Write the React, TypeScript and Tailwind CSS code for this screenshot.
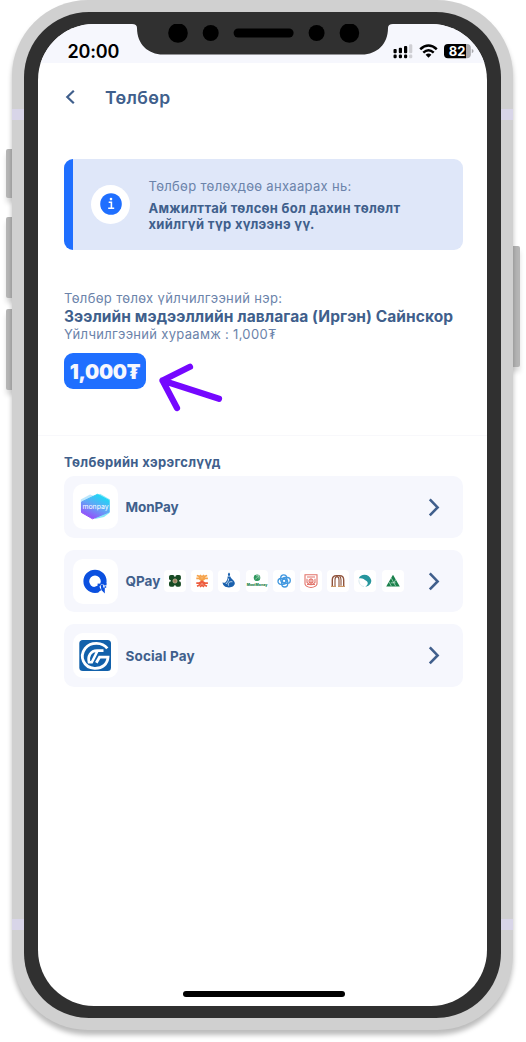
import React from "react";

function StatusIcons() {
  return (
    <svg className="absolute left-[354px] top-[18px]" width="82" height="20" viewBox="392 42 82 20">
      <g fill="#000">
        <rect x="393.5" y="49" width="3.2" height="4.2" rx="1" />
        <rect x="398.8" y="47.8" width="3.2" height="5.4" rx="1" />
        <rect x="404" y="46" width="3.2" height="7.2" rx="1" />
        <rect x="393.5" y="54.6" width="3.2" height="3.6" rx="1.2" />
        <rect x="398.8" y="54.6" width="3.2" height="3.6" rx="1.2" />
        <rect x="404" y="54.6" width="3.2" height="3.6" rx="1.2" />
      </g>
      <g fill="#cfcfd4">
        <rect x="409.1" y="44.2" width="3.2" height="9" rx="1.2" />
        <rect x="409.1" y="54.6" width="3.2" height="3.6" rx="1.2" />
      </g>
      <g fill="none" stroke="#000" strokeWidth="2.5">
        <path d="M420.2 49.3 Q428.5 41.8 436.8 49.3" />
        <path d="M423.3 52.6 Q428.5 48 433.7 52.6" />
      </g>
      <path d="M425.6 54.7 Q428.5 52.4 431.4 54.7 L428.5 57.7Z" />
      <path d="M448 44h18v14.2h-18a4 4 0 0 1-4-4V48a4 4 0 0 1 4-4z" />
      <path d="M466 44h.8a4 4 0 0 1 4 4v6.2a4 4 0 0 1-4 4h-.8z" fill="#a9a9ad" />
      <path d="M471.8 49v4.2q1.8-.6 1.8-2.1t-1.8-2.1z" fill="#a9a9ad" />
      <text x="457" y="55.9" fontFamily="Inter, sans-serif" fontSize="13" fontWeight="700" fill="#fff" textAnchor="middle">82</text>
    </svg>
  );
}

function Notch() {
  return (
    <svg className="absolute left-[94px] top-0" width="262" height="31" viewBox="132 24 262 31">
      <path d="M132 24H393Q388 24 388 28C388 44 377 54.5 362 54.5H163C148 54.5 137 44 137 28Q137 24 132 24Z" fill="#303030" />
      <circle cx="178" cy="33" r="9.8" />
      <circle cx="210.7" cy="33" r="8" />
      <rect x="233.6" y="28.5" width="60" height="9" rx="4.5" />
      <circle cx="316.6" cy="33" r="8" />
      <circle cx="349.4" cy="33" r="9.8" />
    </svg>
  );
}

function MonPayLogo() {
  return (
    <svg width="45" height="45" viewBox="0 0 45 45">
      <defs>
        <linearGradient id="mon" x1=".8" y1="0" x2=".25" y2="1">
          <stop offset="0" stopColor="#12e0f5" />
          <stop offset=".5" stopColor="#62a5f6" />
          <stop offset="1" stopColor="#9a45fb" />
        </linearGradient>
      </defs>
      <path d="M17 10.5 7.8 15.5V27L22 34l14-5V17z" fill="#8fd7fa" opacity=".6" />
      <path d="M27 9.8 37 15.5V28.5L31 33 22 35 13 20z" fill="#55dbf5" opacity=".7" />
      <path d="M24.5 10.3 36 16.4V28L19.5 34.8 8.5 28.5V18z" fill="url(#mon)" stroke="url(#mon)" strokeWidth="1" strokeLinejoin="round" />
      <text x="22.5" y="24.8" textAnchor="middle" fill="#fff" fontFamily="Inter, sans-serif" fontSize="6.5" textLength="26" lengthAdjust="spacingAndGlyphs">monpay</text>
    </svg>
  );
}

function QPayLogo() {
  return (
    <svg width="45" height="45" viewBox="0 0 45 45">
      <circle cx="22" cy="22.3" r="8.7" fill="none" stroke="#0b50df" strokeWidth="5.8" />
      <path d="M25 29.5 28 25.5 36 26V37H28z" fill="#fff" />
      <g fill="#0b50df">
        <path d="M20 28.5 25.6 26.3 28.3 31.2 24 33.6z" />
        <rect x="24.6" y="24.6" width="2.4" height="2.4" />
        <path d="M27.6 26h2.6v2.6h1.6v5.8l-3.4-3.4z" />
        <rect x="31" y="24.2" width="2.5" height="2.2" />
        <rect x="31.6" y="27.2" width="1.6" height="1.6" />
      </g>
    </svg>
  );
}

function SocialPayLogo() {
  return (
    <svg width="45" height="45" viewBox="0 0 45 45">
      <rect x="6.3" y="7" width="31.7" height="31" rx="3.5" fill="#1261ab" />
      <g fill="none" stroke="#fff">
        <path d="M34.3 15.3C29.5 9 18 8.4 12.2 15.3C6 23.5 10.5 34.8 21.5 35.3C29.5 35.6 34.6 31 35 24.2H26.5L23.3 29.8" strokeWidth="2.8" />
        <path d="M30.5 17.6H24C17.5 17.6 14.5 23.5 16 29.3L18.8 29.3L24.2 18.5" strokeWidth="2.6" />
      </g>
    </svg>
  );
}

const bankLogos: React.ReactNode[] = [
  <g key="khan">
    <g fill="#174a23">
      <rect x="5" y="5" width="5.6" height="5.4" rx="1.8" />
      <rect x="11.3" y="5" width="5.6" height="5.4" rx="1.8" />
      <rect x="5" y="11.2" width="5.6" height="5.6" rx="1.8" />
      <rect x="11.3" y="11.2" width="5.6" height="5.6" rx="1.8" />
      <rect x="7" y="7" width="8" height="8" />
    </g>
    <circle cx="11" cy="11" r="2.1" fill="#a08160" stroke="#d4c1a5" strokeWidth=".7" />
  </g>,
  <g key="tdb" fill="none" strokeWidth="1.7">
    <path d="M5.3 8.3H8L11 10.8 14 8.3H16.9M5.8 5.5 8 6.3 11 10 14 6.3 16.2 5.5M9 5 11 7 13 5" stroke="#f6a34a" />
    <path d="M5.3 13.2H8L11 11.2 14 13.2H16.9M6 16.2 8 15.4 11 12 14 15.4 16 16.2M9 16.8 11 15 13 16.8" stroke="#ed5c3e" />
  </g>,
  <g key="golomt">
    <path d="M11 2.6q2.2 2.2 0 3.9q-2.2-1.7 0-3.9z" fill="#1c62ae" />
    <path d="M9.6 6.5h2.8c.2 2.4 4 3.4 4.4 6.5.1 2.8-2.5 4.4-5.8 4.4-3.7 0-6.4-2-6.4-5.2q1.5 1 2.6.2C9 10.8 9.8 9 9.6 6.5z" fill="#1b61ad" />
    <path d="M14.4 11.8c-3.2-.6-4.9 1.5-3.8 3.8M10.6 8.5c.2 2.5-1.6 4-2.7 5.5" fill="none" stroke="#cce2f4" strokeWidth="1" />
  </g>,
  <g key="most">
    <circle cx="11" cy="7.7" r="3.3" fill="#2f985d" />
    <path d="m9.3 9.4 3.7-3.7m-3 0h3v3" stroke="#d4eedf" strokeWidth=".6" fill="none" />
    <text x="11" y="15.6" textAnchor="middle" fontFamily="Inter, sans-serif" fontSize="3.5" fontWeight="800" fill="#24854c">MostMoney</text>
  </g>,
  <g key="khas" fill="none" stroke="#4399e0" strokeWidth="1.3">
    <rect x="7.7" y="4.8" width="6" height="8" rx="3" />
    <rect x="8.7" y="9" width="6" height="8" rx="3" />
    <rect x="5" y="8.5" width="8" height="5.8" rx="2.9" />
    <rect x="9.3" y="7.5" width="8" height="5.8" rx="2.9" />
  </g>,
  <g key="state" fill="none" stroke="#e27369" strokeWidth="1.1">
    <path d="M5 4.7h12v9.5q-1 3-6 3.3-5-.3-6-3.3z" />
    <path d="M7 7h8M7 8.8v3.5q4 5 8 0V8.8" />
    <circle cx="11" cy="11" r="2" />
    <path d="M11 8.5v6M7 14.5h8" />
  </g>,
  <g key="arch" fill="none">
    <path d="M5.3 16V10q0-4.4 4.2-4.4h3.2q4 0 4 4.4v6" stroke="#90533c" strokeWidth="1.4" />
    <path d="M8 16V10q0-3.4 2-3.4t2 3.4v6m2-.2V10q0-2.5-1.4-4" stroke="#8c5139" strokeWidth="1.1" />
    <path d="M4 16.4h5M11 16.4h7" stroke="#c88d55" />
  </g>,
  <g key="capitron">
    <path d="M4.8 8.5C6.5 3.2 15.5 3.4 17.2 10c.7 3.8-3 6.8-6 6.5 3-1.4 3.2-4.5 1.3-5.6C9.8 9.5 8.7 7.8 4.8 8.5z" fill="#27969d" />
    <path d="M5 9.5C4.5 13 6.5 16.2 10 16.5" fill="none" stroke="#d8e9ee" />
  </g>,
  <g key="trans">
    <path d="M11 4.8 17.8 16.5H4.2z" fill="#19804a" />
    <path d="m9.3 8.2 4.4 8M7 12l2.4 4.2M8.8 12.8h4.8M11.8 12.8 14 9.4" stroke="#dff2e8" strokeWidth=".6" fill="none" />
  </g>,
];

function Method({ name, className, logo, banks }: { name: string; className: string; logo: React.ReactNode; banks?: boolean }) {
  return (
    <div className="flex h-[62.5px] items-center rounded-[10px] bg-[#f6f7fd] pl-[8.5px] pr-[22.5px]">
      <div className="size-[45px] shrink-0 overflow-hidden rounded-[10px] bg-white">{logo}</div>
      <span className={`ml-[8px] whitespace-nowrap pt-[1px] text-[13.5px] font-bold text-[#405f8c] ${className}`}>{name}</span>
      {banks && (
        <div className="ml-[3px] flex gap-[5.2px]">
          {bankLogos.map((logoShape, i) => (
            <svg key={i} className="size-[22px] shrink-0 rounded-[4px] bg-white" viewBox="0 0 22 22">{logoShape}</svg>
          ))}
        </div>
      )}
      <svg className="ml-auto shrink-0" width="14" height="20" viewBox="0 0 14 20">
        <path d="m2.8 2.4 7.8 8-7.8 8" fill="none" stroke="#405f8c" strokeWidth="2.6" />
      </svg>
    </div>
  );
}

export default function App() {
  return (
    <div className="relative h-[1042px] w-[526px] overflow-hidden bg-white px-[12px] font-['Inter','Noto_Sans',sans-serif]">
      <i className="absolute left-[6px] top-[149px] h-[49px] w-[8px] rounded-l-[2px] bg-[#b5b5b5] shadow-[0_5px_5px_#0002]" />
      <i className="absolute left-[6px] top-[217px] h-[81px] w-[8px] rounded-l-[2px] bg-[#b5b5b5] shadow-[0_5px_5px_#0002]" />
      <i className="absolute left-[6px] top-[309px] h-[81px] w-[8px] rounded-l-[2px] bg-[#b5b5b5] shadow-[0_5px_5px_#0002]" />
      <i className="absolute left-[510px] top-[246px] h-[121px] w-[10px] rounded-r-[2px] bg-[#b5b5b5] shadow-[0_5px_5px_#0002]" />

      <div className="relative h-[1030px] w-[500.5px] rounded-[76px] bg-[#d0d0d0] p-[12px] shadow-[0_5px_5px_#0004]">
        <i className="absolute left-0 top-[109px] h-[11px] w-full bg-[#d8d5e8]" />
        <i className="absolute left-0 top-[919px] h-[11px] w-full bg-[#d8d5e8]" />
        <div className="relative h-[1006px] w-[476.5px] rounded-[65px] bg-[#303030] px-[14px] py-[12px]">
          <main className="relative h-[982px] w-[448.5px] overflow-hidden rounded-[56px] bg-white text-[#405f8c]">
            <header className="h-[39px] bg-[#f6f7fd] pl-[29.5px] pt-[16px]">
              <span className="block text-[18px] font-semibold leading-[24px] tracking-[-0.2px] text-black">20:00</span>
            </header>
            <Notch />
            <StatusIcons />

            <div className="flex h-[95.5px] items-start pl-[26.5px] pt-[23px]">
              <svg className="mt-[2px]" width="13" height="18" viewBox="0 0 13 18">
                <path d="M8.8 2.8 2.3 9l6.5 6.2" fill="none" stroke="#405f8c" strokeWidth="2.2" />
              </svg>
              <h1 className="ml-[27.5px] whitespace-nowrap text-[17.5px] font-semibold leading-[24px] tracking-[0.35px]">Төлбөр</h1>
            </div>

            <div className="pl-[26px] pr-[23.5px]">
              <section className="flex h-[91px] items-center overflow-hidden rounded-[9px] border-l-[9.5px] border-[#1f6fff] bg-[#dfe7f9]">
                <div className="ml-[18px] grid size-[39px] shrink-0 place-items-center rounded-full bg-white">
                  <svg width="22" height="22" viewBox="0 0 22 22">
                    <circle cx="11" cy="11" r="10.8" fill="#1f6fff" />
                    <path d="M8.7 9.2H11.4V15M8.2 15.3h6" fill="none" stroke="#fff" strokeWidth="1.6" />
                    <circle cx="11" cy="6.1" r="1.3" fill="#fff" />
                  </svg>
                </div>
                <div className="ml-[18.5px] whitespace-nowrap">
                  <p className="text-[13px] leading-[18px] tracking-[0.31px] text-[#6b83aa]">Төлбөр төлөхдөө анхаарах нь:</p>
                  <p className="mt-[5px] text-[13px] font-bold leading-[16px] tracking-[0.27px]">Амжилттай төлсөн бол дахин төлөлт</p>
                  <p className="text-[13px] font-bold leading-[16px] tracking-[0.33px]">хийлгүй түр хүлээнэ үү.</p>
                </div>
              </section>

              <section className="mt-[39.5px] whitespace-nowrap">
                <p className="text-[13px] leading-[18px] tracking-[0.34px] text-[#6b83aa]">Төлбөр төлөх үйлчилгээний нэр:</p>
                <h2 className="pt-[1px] text-[15.5px] font-bold leading-[18px] tracking-[0.08px]">Зээлийн мэдээллийн лавлагаа (Иргэн) Сайнскор</h2>
                <p className="text-[13px] leading-[17px] tracking-[0.31px] text-[#6b83aa]">Үйлчилгээний хураамж : 1,000₮</p>
                <div className="mt-[9.5px] flex h-[36.5px] w-[82px] items-center justify-center rounded-[9px] bg-[#1f6fff] pt-[2px] text-[20px] font-black tracking-[-0.3px] text-[#f6f7fd]">1,000₮</div>
              </section>
            </div>

            <hr className="mt-[45.5px] border-[#f8f8fb]" />

            <section className="pl-[26px] pr-[23.5px] pt-[17.5px]">
              <h3 className="whitespace-nowrap text-[13px] font-bold leading-[18px] tracking-[0.32px]">Төлбөрийн хэрэгслүүд</h3>
              <div className="mt-[4.5px] flex flex-col gap-[11.8px]">
                <Method name="MonPay" className="w-[54px] tracking-[-0.1px]" logo={<MonPayLogo />} />
                <Method name="QPay" className="w-[35.5px]" logo={<QPayLogo />} banks />
                <Method name="Social Pay" className="w-[70px] tracking-[0.15px]" logo={<SocialPayLogo />} />
              </div>
            </section>
            <i className="absolute left-[145px] top-[966.5px] h-[6.5px] w-[162px] rounded-full bg-black" />
          </main>
        </div>
      </div>

      <svg className="absolute left-[155px] top-[358px]" width="72" height="58" viewBox="155 358 72 58">
        <path d="M190 366.8 162.5 380.5 177 408M162.5 380.5 219 398.8" fill="none" stroke="#7508ff" strokeWidth="6.2" strokeLinecap="round" strokeLinejoin="round" />
      </svg>
    </div>
  );
}
